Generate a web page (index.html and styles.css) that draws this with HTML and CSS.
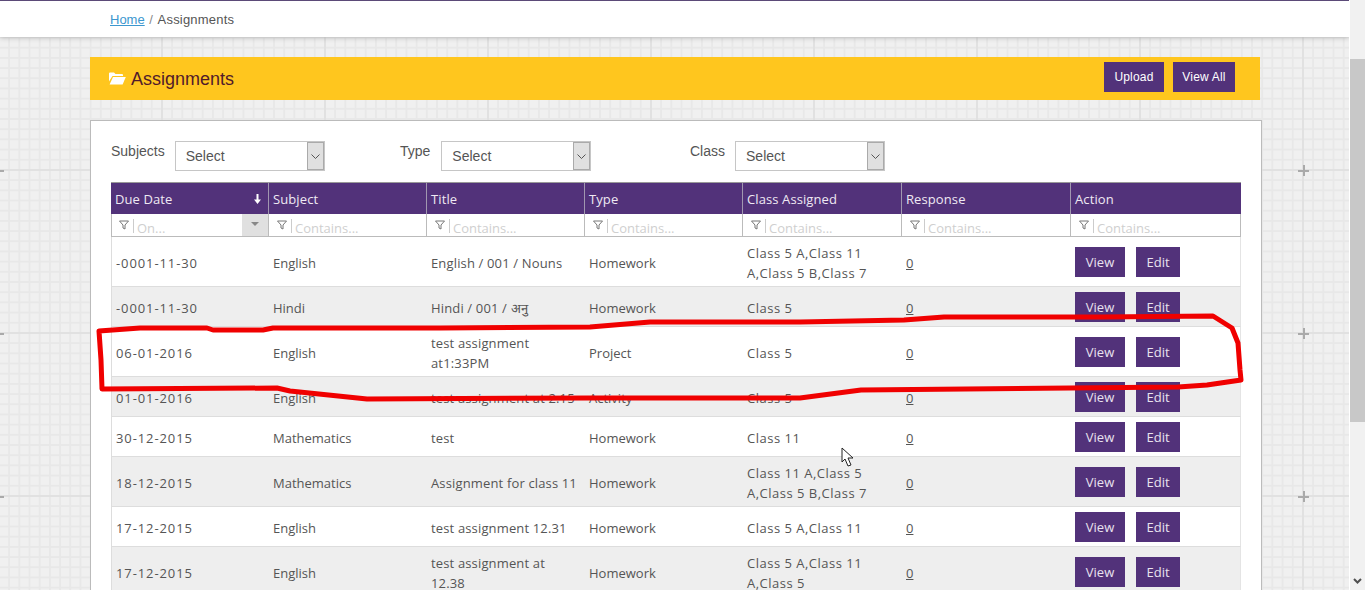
FILE: index.html
```html
<!DOCTYPE html>
<html lang="en">
<head>
    <meta charset="UTF-8">
    <title>Assignments</title>
    <link rel="stylesheet" href="styles.css">
</head>
<body>

<div class="page">
    <div class="main">
        <span class="plus plus-a"></span>
        <span class="plus plus-b"></span>
        <span class="plus plus-c"></span>
        <span class="plus plus-d"></span>
        <span class="plus plus-e"></span>
        <span class="plus plus-f"></span>

        <!-- Breadcrumb -->
        <div class="topbar">
            <a class="crumb-link" href="#">Home</a>
            <span class="crumb-sep">/</span>
            <span class="crumb-now">Assignments</span>
        </div>

        <div class="content">
            <!-- Title bar -->
            <div class="titlebar">
                <svg class="folder" width="17" height="13" viewBox="0 0 17 13">
                    <path d="M0 1.5 Q0 .5 1 .5 H5 L6.5 2 H13 Q14 2 14 3 V4 H3.5 L0 9.5 Z" fill="#fff"/>
                    <path d="M4 5 H16.8 L13.6 12.5 H.6 Z" fill="#fff"/>
                </svg>
                <h1 class="title">Assignments</h1>
                <a class="top-btn top-btn-upload" href="#">Upload</a>
                <a class="top-btn top-btn-all" href="#">View All</a>
            </div>

            <div class="panel">
                <!-- Filters -->
                <div class="filters">
                    <div class="filter">
                        <label>Subjects</label>
                        <div class="select"><span class="select-text">Select</span><span class="select-arrow"><svg width="9" height="5" viewBox="0 0 9 5"><path d="M.5.5 L4.5 4.5 L8.5.5" fill="none" stroke="#555"/></svg></span></div>
                    </div>
                    <div class="filter filter-type">
                        <label>Type</label>
                        <div class="select"><span class="select-text">Select</span><span class="select-arrow"><svg width="9" height="5" viewBox="0 0 9 5"><path d="M.5.5 L4.5 4.5 L8.5.5" fill="none" stroke="#555"/></svg></span></div>
                    </div>
                    <div class="filter">
                        <label>Class</label>
                        <div class="select"><span class="select-text">Select</span><span class="select-arrow"><svg width="9" height="5" viewBox="0 0 9 5"><path d="M.5.5 L4.5 4.5 L8.5.5" fill="none" stroke="#555"/></svg></span></div>
                    </div>
                </div>

                <!-- Grid -->
                <table class="grid">
                    <colgroup>
                        <col class="col-a"><col class="col-a"><col class="col-a"><col class="col-a">
                        <col class="col-b"><col class="col-c"><col class="col-d">
                    </colgroup>
                    <thead>
                        <tr class="head-row">
                            <th>Due Date<svg class="sort" width="7" height="10" viewBox="0 0 7 10"><path d="M2.5 0 H4.5 V5.5 H7 L3.5 10 L0 5.5 H2.5 Z" fill="#fff"/></svg></th>
                            <th>Subject</th>
                            <th>Title</th>
                            <th>Type</th>
                            <th>Class Assigned</th>
                            <th>Response</th>
                            <th>Action</th>
                        </tr>
                        <tr class="filter-row">
                            <td class="first"><div class="cell-filter"><svg class="funnel" width="10" height="10" viewBox="0 0 10 10"><path d="M.5 1 H9.5 L6 5 V9 L4 8 V5 Z" fill="none" stroke="#777"/></svg><span class="ph">On...</span><span class="date-drop"></span></div></td>
                            <td><div class="cell-filter"><svg class="funnel" width="10" height="10" viewBox="0 0 10 10"><path d="M.5 1 H9.5 L6 5 V9 L4 8 V5 Z" fill="none" stroke="#777"/></svg><span class="ph">Contains...</span></div></td>
                            <td><div class="cell-filter"><svg class="funnel" width="10" height="10" viewBox="0 0 10 10"><path d="M.5 1 H9.5 L6 5 V9 L4 8 V5 Z" fill="none" stroke="#777"/></svg><span class="ph">Contains...</span></div></td>
                            <td><div class="cell-filter"><svg class="funnel" width="10" height="10" viewBox="0 0 10 10"><path d="M.5 1 H9.5 L6 5 V9 L4 8 V5 Z" fill="none" stroke="#777"/></svg><span class="ph">Contains...</span></div></td>
                            <td><div class="cell-filter"><svg class="funnel" width="10" height="10" viewBox="0 0 10 10"><path d="M.5 1 H9.5 L6 5 V9 L4 8 V5 Z" fill="none" stroke="#777"/></svg><span class="ph">Contains...</span></div></td>
                            <td><div class="cell-filter"><svg class="funnel" width="10" height="10" viewBox="0 0 10 10"><path d="M.5 1 H9.5 L6 5 V9 L4 8 V5 Z" fill="none" stroke="#777"/></svg><span class="ph">Contains...</span></div></td>
                            <td><div class="cell-filter"><svg class="funnel" width="10" height="10" viewBox="0 0 10 10"><path d="M.5 1 H9.5 L6 5 V9 L4 8 V5 Z" fill="none" stroke="#777"/></svg><span class="ph">Contains...</span></div></td>
                        </tr>
                    </thead>
                    <tbody>
                        <tr>
                            <td class="first">-0001-11-30</td><td>English</td><td>English / 001 / Nouns</td><td>Homework</td>
                            <td>Class 5 A,Class 11 A,Class 5 B,Class 7</td><td><a class="count" href="#">0</a></td>
                            <td><a class="btn btn-view" href="#">View</a><a class="btn" href="#">Edit</a></td>
                        </tr>
                        <tr class="alt">
                            <td class="first">-0001-11-30</td><td>Hindi</td><td>Hindi / 001 / अनु</td><td>Homework</td>
                            <td>Class 5</td><td><a class="count" href="#">0</a></td>
                            <td><a class="btn btn-view" href="#">View</a><a class="btn" href="#">Edit</a></td>
                        </tr>
                        <tr>
                            <td class="first">06-01-2016</td><td>English</td><td>test assignment at1:33PM</td><td>Project</td>
                            <td>Class 5</td><td><a class="count" href="#">0</a></td>
                            <td><a class="btn btn-view" href="#">View</a><a class="btn" href="#">Edit</a></td>
                        </tr>
                        <tr class="alt">
                            <td class="first">01-01-2016</td><td>English</td><td>test assignment at 2:15</td><td>Activity</td>
                            <td>Class 5</td><td><a class="count" href="#">0</a></td>
                            <td><a class="btn btn-view" href="#">View</a><a class="btn" href="#">Edit</a></td>
                        </tr>
                        <tr>
                            <td class="first">30-12-2015</td><td>Mathematics</td><td>test</td><td>Homework</td>
                            <td>Class 11</td><td><a class="count" href="#">0</a></td>
                            <td><a class="btn btn-view" href="#">View</a><a class="btn" href="#">Edit</a></td>
                        </tr>
                        <tr class="alt">
                            <td class="first">18-12-2015</td><td>Mathematics</td><td>Assignment for class 11</td><td>Homework</td>
                            <td>Class 11 A,Class 5 A,Class 5 B,Class 7</td><td><a class="count" href="#">0</a></td>
                            <td><a class="btn btn-view" href="#">View</a><a class="btn" href="#">Edit</a></td>
                        </tr>
                        <tr>
                            <td class="first">17-12-2015</td><td>English</td><td>test assignment 12.31</td><td>Homework</td>
                            <td>Class 5 A,Class 11</td><td><a class="count" href="#">0</a></td>
                            <td><a class="btn btn-view" href="#">View</a><a class="btn" href="#">Edit</a></td>
                        </tr>
                        <tr class="alt">
                            <td class="first">17-12-2015</td><td>English</td><td>test assignment at 12.38</td><td>Homework</td>
                            <td>Class 5 A,Class 11 A,Class 5</td><td><a class="count" href="#">0</a></td>
                            <td><a class="btn btn-view" href="#">View</a><a class="btn" href="#">Edit</a></td>
                        </tr>
                    </tbody>
                </table>
            </div>
        </div>
    </div>

    <!-- Scrollbar -->
    <div class="scrollbar">
        <div class="scroll-thumb"></div>
        <svg class="scroll-down" width="9" height="6" viewBox="0 0 9 6"><path d="M1 1 L4.5 4.5 L8 1" fill="none" stroke="#505050" stroke-width="2"/></svg>
    </div>
</div>

<!-- Hand drawn marker and mouse pointer on top of the screenshot -->
<svg class="scribble" width="1365" height="590" viewBox="0 0 1365 590">
    <path d="M102 389 L101 360 L99 331 L140 328 L207 328 L213 330 L263 330 L273 328 L440 328 L590 327 L650 322 L800 322 L904 320 L944 317 L1100 317 L1213 316 L1232 328 L1238 343 L1240 370 L1241 380 L1207 385 L1178 387 L861 390 L800 398 L590 398 L367 399 L290 391 L277 388 Z" fill="none" stroke="#f00000" stroke-width="5" stroke-linejoin="round"/>
    <path d="M842 448 V462 L845 459 L848 466 L851 465 L848 458 L853 458 Z" fill="#fff" stroke="#222" stroke-width="1"/>
</svg>

</body>
</html>
```

FILE: styles.css
```css
html, body {
    margin: 0;
    padding: 0;
    height: 100%;
    overflow: hidden;
}

body {
    font-family: 'Liberation Sans', Arial, sans-serif;
    color: #555;
    position: relative;
}

a {
    text-decoration: none;
}

.page {
    display: flex;
    height: 590px;
    background: #fff;
}

.main {
    position: relative;
    width: 1349px;
    height: 590px;
    margin-right: 1px;
    overflow: hidden;
    background-color: #f0f0f0;
    background-image:
        linear-gradient(#e1e1e1 2px, transparent 2px),
        linear-gradient(90deg, #e1e1e1 2px, transparent 2px),
        linear-gradient(#e8e8e8 2px, transparent 2px),
        linear-gradient(90deg, #e8e8e8 2px, transparent 2px);
    background-size: 163px 163px, 163px 163px, 10.19px 10.19px, 10.19px 10.19px;
    background-position: 0 6px, -2px 0, 0 6px, -2px 0;
}

/* Small plus marks in the background pattern */
.plus {
    position: absolute;
    width: 11px;
    height: 11px;
    background-image: linear-gradient(#aaa, #aaa), linear-gradient(#aaa, #aaa);
    background-size: 11px 2px, 2px 11px;
    background-position: center;
    background-repeat: no-repeat;
}

.plus-a { left: -7px; top: 165px; }
.plus-b { left: -7px; top: 328px; }
.plus-c { left: -7px; top: 491px; }
.plus-d { left: 1298px; top: 165px; }
.plus-e { left: 1298px; top: 328px; }
.plus-f { left: 1298px; top: 491px; }

/* Breadcrumb */
.topbar {
    position: relative;
    height: 36px;
    padding-left: 110px;
    background: #fff;
    border-top: 1px solid #5b4a78;
    box-shadow: 0 1px 5px rgba(0, 0, 0, 0.2);
    font-size: 13px;
    line-height: 38px;
    color: #555;
}

.crumb-link {
    color: #3c97cf;
    text-decoration: underline;
}

.crumb-sep {
    margin: 0 1px;
    color: #888;
}

.crumb-now {
    letter-spacing: 0.2px;
}

.content {
    position: relative;
    padding: 20px 0 0 90px;
}

/* Yellow title bar */
.titlebar {
    display: flex;
    align-items: center;
    width: 1170px;
    height: 43px;
    box-sizing: border-box;
    padding: 0 25px 0 19px;
    background: #ffc61e;
}

.folder {
    margin-right: 5px;
}

.title {
    flex: 1;
    margin: 2px 0 0;
    font-size: 18px;
    font-weight: normal;
    color: #511a2b;
}

.top-btn {
    height: 30px;
    box-sizing: border-box;
    margin-top: -3px;
    background: #52327a;
    color: #fff;
    font-size: 12px;
    letter-spacing: 0.2px;
    line-height: 30px;
    text-align: center;
}

.top-btn-upload {
    width: 60px;
    margin-right: 9px;
}

.top-btn-all {
    width: 62px;
}

/* White panel */
.panel {
    width: 1130px;
    margin-top: 20px;
    padding: 20px;
    background: #fff;
    border: 1px solid #bbb;
}

.filters {
    display: grid;
    grid-template-columns: 289px 290px 290px;
    height: 30px;
    margin-bottom: 11px;
}

.filter {
    display: flex;
    gap: 10px;
}

.filter-type {
    gap: 11px;
}

.filter label {
    font-size: 14px;
    line-height: 20px;
}

.select {
    display: flex;
    width: 150px;
    height: 30px;
    box-sizing: border-box;
    border: 1px solid #c6c6c6;
}

.select-text {
    flex: 1;
    padding: 5px 0 0 10px;
    font-size: 14px;
    line-height: 19px;
    color: #555;
}

.select-arrow {
    display: flex;
    align-items: center;
    justify-content: center;
    width: 17px;
    box-sizing: border-box;
    background: #e0e0e0;
    border: 1px solid #aaa;
}

/* Table */
.grid {
    width: 1130px;
    table-layout: fixed;
    border-collapse: separate;
    border-spacing: 0;
    font-family: 'Open Sans', sans-serif;
    font-size: 13px;
    line-height: 20px;
}

.col-a { width: 158px; }
.col-b { width: 159px; }
.col-c { width: 169px; }
.col-d { width: 170px; }

.head-row th {
    position: relative;
    height: 32px;
    box-sizing: border-box;
    padding: 0 4px;
    background: #52327a;
    border-top: 1px solid #999;
    border-right: 1px solid #a197b0;
    color: #efe9f3;
    font-weight: normal;
    letter-spacing: 0.1px;
    text-align: left;
}

.head-row th:last-child {
    border-right: 0;
}

.sort {
    position: absolute;
    right: 7px;
    top: 11px;
}

.filter-row td {
    height: 23px;
    box-sizing: border-box;
    padding: 0;
    border-bottom: 1px solid #bbb;
    border-right: 1px solid #bbb;
}

.filter-row td.first {
    border-left: 1px solid #bbb;
}

.cell-filter {
    display: flex;
    align-items: center;
    height: 22px;
    padding-left: 8px;
}

.first .cell-filter {
    padding-left: 7px;
}

.funnel {
    flex: none;
}

.ph {
    margin: 2px 0 0 4px;
    padding-left: 3px;
    border-left: 1px solid #ccc;
    color: #cfcfcf;
    line-height: 18px;
    height: 14px;
}

.date-drop {
    position: relative;
    width: 26px;
    height: 22px;
    margin-left: auto;
    background: #e0e0e0;
}

.date-drop::after {
    content: "";
    position: absolute;
    left: 9px;
    top: 8px;
    border-left: 4px solid transparent;
    border-right: 4px solid transparent;
    border-top: 4px solid #888;
}

tbody td {
    padding: 6px 4px 3px;
    border-bottom: 1px solid #ddd;
    color: #555;
    vertical-align: middle;
}

tbody td:last-child {
    padding: 5px 4px 4px;
    border-right: 1px solid #e4e4e4;
}

tbody td.first {
    border-left: 1px solid #ddd;
    letter-spacing: 0.9px;
}

tbody td:nth-child(3) {
    letter-spacing: 0.15px;
}

tbody td:nth-child(5) {
    letter-spacing: 0.5px;
}

tbody tr.alt td {
    background: #eee;
}

.count {
    color: #555;
    text-decoration: underline;
}

.btn {
    display: inline-block;
    width: 44px;
    height: 30px;
    background: #52327a;
    color: #e9e3ef;
    font-size: 13px;
    letter-spacing: 0;
    line-height: 30px;
    text-align: center;
    vertical-align: middle;
}

.btn-view {
    width: 50px;
    margin-right: 11px;
}

/* Scrollbar */
.scrollbar {
    position: relative;
    width: 15px;
    height: 590px;
    background: #f1f1f1;
}

.scroll-thumb {
    width: 15px;
    height: 363px;
    margin-top: 59px;
    background: #c8c8c8;
}

.scroll-down {
    position: absolute;
    left: 3px;
    top: 578px;
}

/* Red marker and pointer */
.scribble {
    position: absolute;
    left: 0;
    top: 0;
    pointer-events: none;
}
```
